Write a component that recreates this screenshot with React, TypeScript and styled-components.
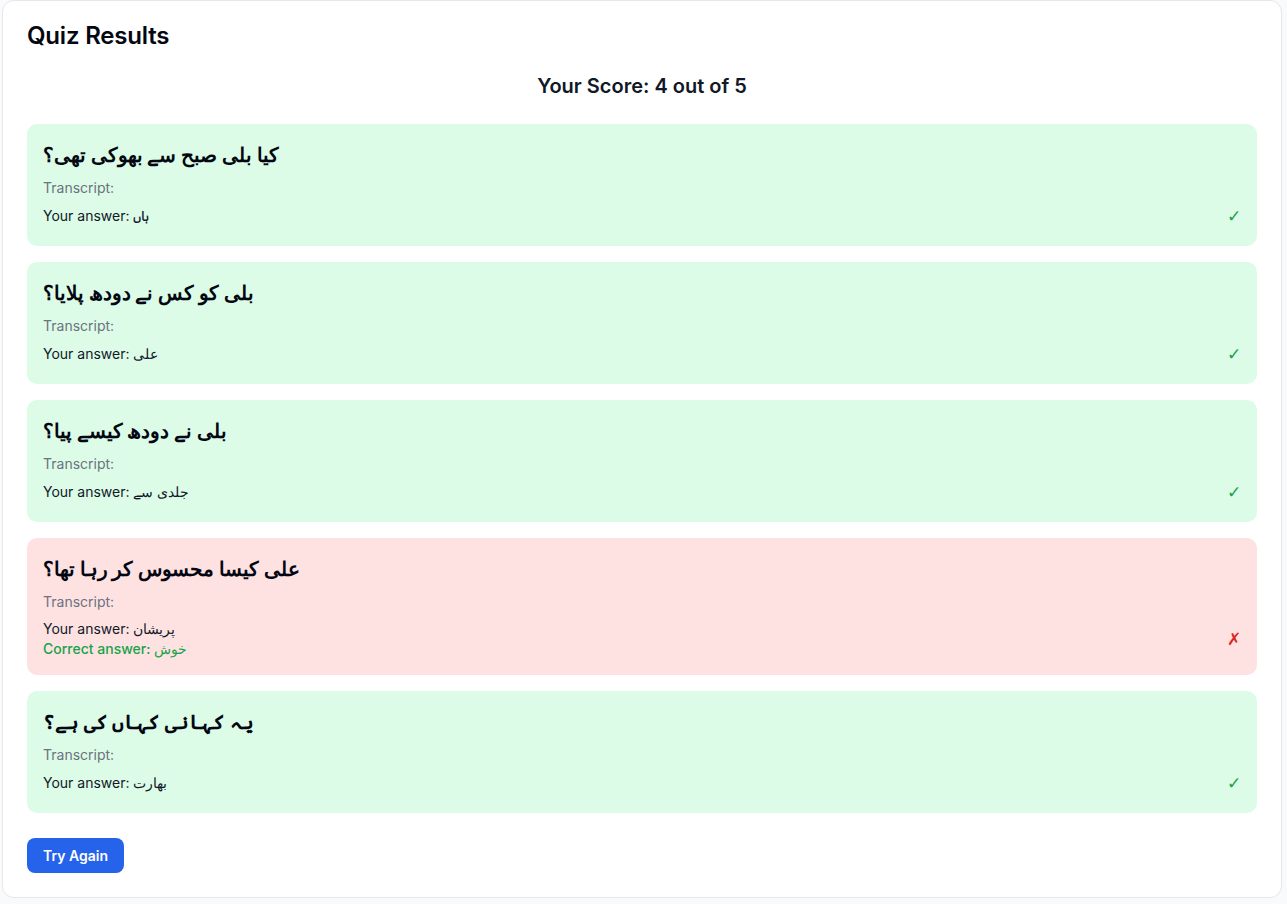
import React from "react";
import styled, { createGlobalStyle } from "styled-components";

const GlobalStyle = createGlobalStyle`
  * {
    box-sizing: border-box;
  }
  body {
    margin: 0;
    background-color: #f9fafb;
    font-family: Inter, sans-serif;
    color: #111827;
  }
`;

const Page = styled.div`
  padding: 0 0 0 2px;
`;

const ResultsCard = styled.div`
  width: 1280px;
  background-color: #ffffff;
  border: 1px solid #e5e7eb;
  border-radius: 12px;
  padding: 19px 24px 24px;
`;

const Title = styled.h1`
  margin: 0 0 20px;
  font-size: 24px;
  line-height: 32px;
  font-weight: 600;
  color: #030712;
  letter-spacing: -0.2px;
`;

const Score = styled.h2`
  margin: 0 0 24px;
  text-align: center;
  font-size: 20px;
  line-height: 28px;
  font-weight: 600;
  color: #111827;
`;

const QuestionList = styled.div`
  display: flex;
  flex-direction: column;
  gap: 16px;
`;

const QuestionCard = styled.div<{ $correct: boolean }>`
  background-color: ${(p) => (p.$correct ? "#dcfce7" : "#fee2e2")};
  border-radius: 10px;
  padding: 16px;
`;

const QuestionText = styled.h3`
  margin: 0 0 8px;
  font-size: 20px;
  line-height: 30px;
  font-weight: 700;
  color: #030712;
`;

const Transcript = styled.p`
  margin: 0;
  font-size: 14px;
  line-height: 20px;
  color: #6b7280;
`;

const AnswerRow = styled.div<{ $correct: boolean }>`
  margin-top: ${(p) => (p.$correct ? "4px" : "7px")};
  display: flex;
  justify-content: space-between;
  align-items: center;
`;

const AnswerBlock = styled.div`
  display: flex;
  flex-direction: column;
`;

const AnswerLine = styled.p<{ $tone?: "correct" }>`
  margin: 0;
  font-size: 14px;
  line-height: 20px;
  color: ${(p) => (p.$tone === "correct" ? "#16a34a" : "#111827")};
  font-weight: ${(p) => (p.$tone === "correct" ? 500 : 400)};
`;

const Mark = styled.span<{ $correct: boolean }>`
  font-family: "DejaVu Sans", sans-serif;
  font-size: 17px;
  line-height: 28px;
  font-weight: 300;
  color: ${(p) => (p.$correct ? "#16a34a" : "#dc2626")};
`;

const TryAgainButton = styled.button`
  margin-top: 25px;
  background-color: #2563eb;
  color: #ffffff;
  border: none;
  border-radius: 8px;
  padding: 8px 16px;
  font-family: Inter, sans-serif;
  font-size: 14px;
  line-height: 19px;
  font-weight: 600;
  cursor: pointer;
`;

type Result = {
  question: string;
  answer: string;
  correctAnswer: string;
};

const results: Result[] = [
  { question: "کیا بلی صبح سے بھوکی تھی؟", answer: "ہاں", correctAnswer: "ہاں" },
  { question: "بلی کو کس نے دودھ پلایا؟", answer: "علی", correctAnswer: "علی" },
  { question: "بلی نے دودھ کیسے پیا؟", answer: "جلدی سے", correctAnswer: "جلدی سے" },
  { question: "علی کیسا محسوس کر رہا تھا؟", answer: "پریشان", correctAnswer: "خوش" },
  { question: "یہ کہانی کہاں کی ہے؟", answer: "بھارت", correctAnswer: "بھارت" },
];

const App = () => {
  const score = results.filter((r) => r.answer === r.correctAnswer).length;

  return (
    <Page>
      <GlobalStyle />
      <ResultsCard>
        <Title>Quiz Results</Title>
        <Score>
          Your Score: {score} out of {results.length}
        </Score>
        <QuestionList>
          {results.map((r) => {
            const ok = r.answer === r.correctAnswer;
            return (
              <QuestionCard key={r.question} $correct={ok}>
                <QuestionText>{r.question}</QuestionText>
                <Transcript>Transcript:</Transcript>
                <AnswerRow $correct={ok}>
                  <AnswerBlock>
                    <AnswerLine>Your answer: {r.answer}</AnswerLine>
                    {!ok && (
                      <AnswerLine $tone="correct">
                        Correct answer: {r.correctAnswer}
                      </AnswerLine>
                    )}
                  </AnswerBlock>
                  <Mark $correct={ok}>{ok ? "✓" : "✗"}</Mark>
                </AnswerRow>
              </QuestionCard>
            );
          })}
        </QuestionList>
        <TryAgainButton>Try Again</TryAgainButton>
      </ResultsCard>
    </Page>
  );
};

export default App;
